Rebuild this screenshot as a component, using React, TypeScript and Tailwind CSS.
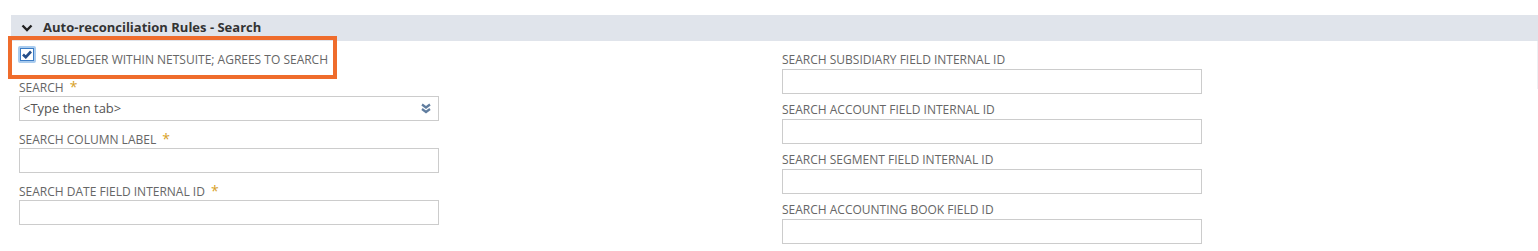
import React from 'react';

const font = { fontFamily: '"Open Sans", "Liberation Sans", sans-serif' };

const leftFields = [
  { label: 'SEARCH', required: true, placeholder: '<Type then tab>', select: true },
  { label: 'SEARCH COLUMN LABEL', required: true },
  { label: 'SEARCH DATE FIELD INTERNAL ID', required: true },
];

const rightFields = [
  'SEARCH SUBSIDIARY FIELD INTERNAL ID',
  'SEARCH ACCOUNT FIELD INTERNAL ID',
  'SEARCH SEGMENT FIELD INTERNAL ID',
  'SEARCH ACCOUNTING BOOK FIELD ID',
];

function Label({ text, required }: { text: string; required?: boolean }) {
  return (
    <div className="h-[16px] leading-[16px] text-[12px] text-[#666666] whitespace-nowrap">
      {text}
      {required && <span className="ml-[6px] text-[#d8a127] text-[14px]">*</span>}
    </div>
  );
}

function DoubleChevron() {
  return (
    <svg width="12" height="11" viewBox="0 0 12 11" fill="none">
      <path d="M2 1.5 L6 4.5 L10 1.5" stroke="#607d9f" strokeWidth="2.2" />
      <path d="M2 6 L6 9 L10 6" stroke="#607d9f" strokeWidth="2.2" />
    </svg>
  );
}

export default function App() {
  return (
    <div className="relative w-[1538px] h-[251px] bg-white overflow-hidden" style={font}>
      {/* section header */}
      <div className="ml-[11px] mt-[15px] h-[26px] bg-[#e0e4eb] flex items-center">
        <svg className="ml-[10px]" width="12" height="8" viewBox="0 0 12 8" fill="none">
          <path d="M1.5 1.5 L6 6 L10.5 1.5" stroke="#222" strokeWidth="2.4" />
        </svg>
        <span className="ml-[10px] text-[13px] font-bold text-[#333333]">
          Auto-reconciliation Rules - Search
        </span>
      </div>
      <div className="absolute right-0 top-[41px] w-px h-[48px] bg-[#eef0f3]" />

      <div className="flex">
        {/* left column */}
        <div className="ml-[18px] w-[421px]">
          <div className="flex items-start mt-[5px]">
            <div className="w-[18px] h-[17px] rounded-[2px] border-2 border-[#a9cbee] bg-[#a9cbee]">
              <div className="w-full h-full border-[1.5px] border-[#3b7cc6] bg-white flex items-center justify-center">
                <svg width="10" height="9" viewBox="0 0 10 9" fill="none">
                  <path d="M1 4.5 L3.8 7.2 L9 1.5" stroke="#264f8a" strokeWidth="2.6" />
                </svg>
              </div>
            </div>
            <div className="ml-[5px] mt-[6px]">
              <Label text="SUBLEDGER WITHIN NETSUITE; AGREES TO SEARCH" />
            </div>
          </div>

          <div className="mt-[11px] ml-px flex flex-col gap-[10px]">
            {leftFields.map((f) => (
              <div key={f.label}>
                <Label text={f.label} required={f.required} />
                <div className="mt-px h-[25px] w-[420px] border border-[#cccccc] bg-white flex items-center justify-between px-[3px]">
                  <span className="text-[13px] text-[#555555]">{f.placeholder}</span>
                  {f.select && (
                    <span className="mr-[3px]">
                      <DoubleChevron />
                    </span>
                  )}
                </div>
              </div>
            ))}
          </div>
        </div>

        {/* right column */}
        <div className="ml-[343px] mt-[11px] flex flex-col gap-[8px]">
          {rightFields.map((label) => (
            <div key={label}>
              <Label text={label} />
              <div className="mt-px h-[25px] w-[420px] border border-[#cccccc] bg-white" />
            </div>
          ))}
        </div>
      </div>

      {/* highlight annotation */}
      <div className="absolute left-[8px] top-[36px] w-[329px] h-[43px] border-[4px] border-[#ef6c2c] pointer-events-none" />
    </div>
  );
}
